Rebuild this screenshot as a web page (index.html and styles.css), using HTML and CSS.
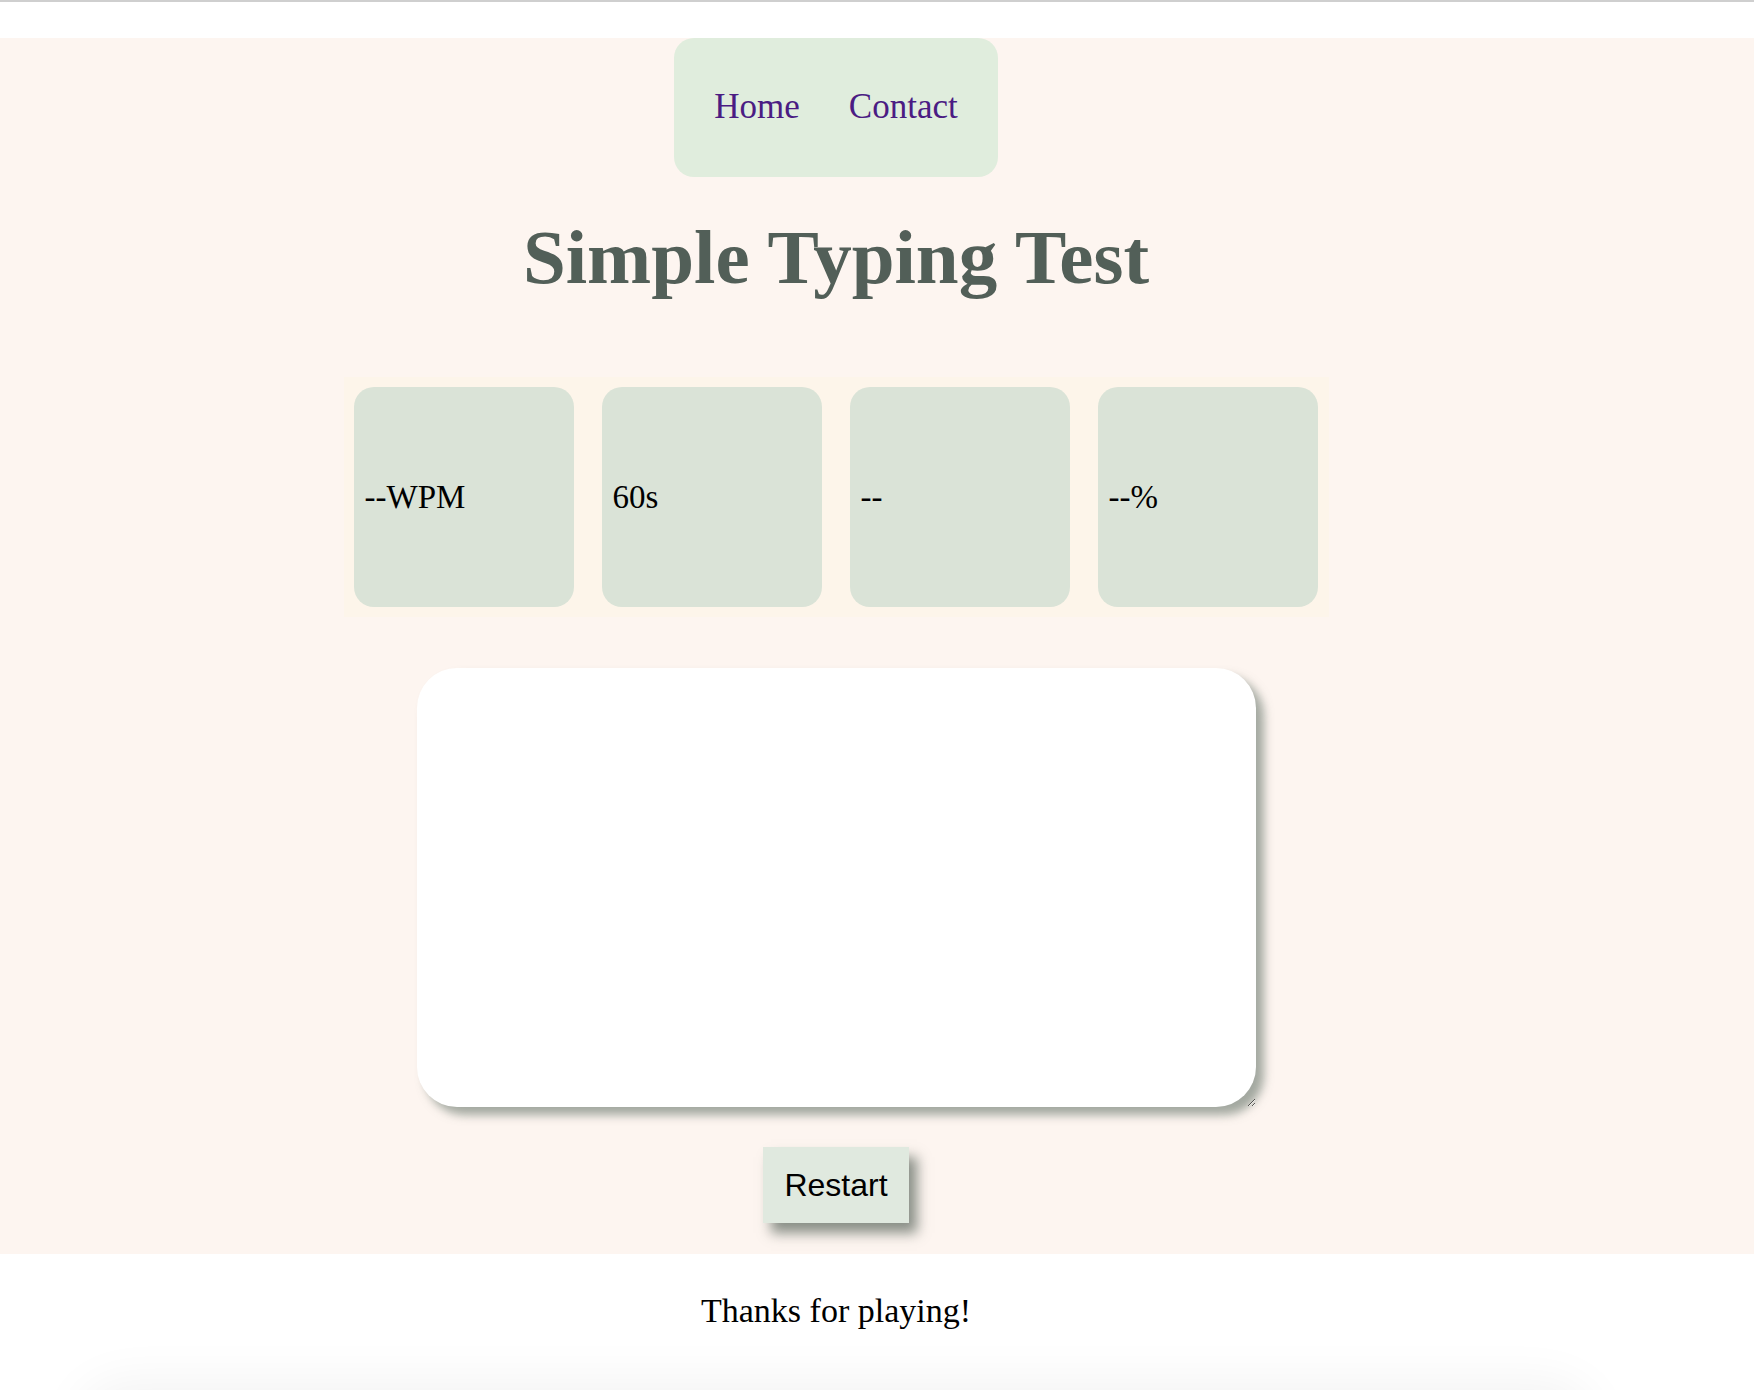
FILE: index.html
```html
<!DOCTYPE html>
<html lang="en">
<head>
<meta charset="utf-8">
<title>Simple Typing Test</title>
<link rel="stylesheet" href="styles.css">
</head>
<body>
<div class="topline"></div>
<div class="topgap"></div>
<main class="main">
  <nav class="nav">
    <a class="nav-link" href="#">Home</a>
    <a class="nav-link" href="#">Contact</a>
  </nav>
  <h1 class="title">Simple Typing Test</h1>
  <section class="stats">
    <div class="stat">--WPM</div>
    <div class="stat">60s</div>
    <div class="stat">--</div>
    <div class="stat">--%</div>
  </section>
  <textarea class="input"></textarea>
  <button class="restart" type="button">Restart</button>
</main>
<footer class="footer">
  <p class="thanks">Thanks for playing!</p>
  <div class="below"></div>
</footer>
</body>
</html>
```
FILE: styles.css
```css
html, body {
  margin: 0;
  padding: 0;
  background: #ffffff;
  font-family: "Liberation Serif", "Times New Roman", serif;
}

.topline {
  height: 2px;
  background: #cfcfcf;
}

.topgap {
  height: 36px;
}

.main {
  background: #fdf5f0;
  display: flex;
  flex-direction: column;
  align-items: center;
  padding: 0 82px 31px 0;
}

.nav {
  display: flex;
  gap: 49px;
  padding: 49px 40px 50px 40px;
  background: #e0eddd;
  border-radius: 20px;
}

.nav-link {
  font-size: 35px;
  line-height: 40px;
  color: #4b1c83;
  text-decoration: none;
}

.title {
  margin: 37px 0 77px 0;
  font-size: 77px;
  line-height: 86px;
  font-weight: bold;
  color: #525f58;
}

.stats {
  display: flex;
  gap: 28px;
  padding: 10px 11px 10px 10px;
  background: #fdf5ea;
}

.stat {
  width: 220px;
  height: 220px;
  box-sizing: border-box;
  padding-left: 11px;
  display: flex;
  align-items: center;
  background: #dae3d7;
  border-radius: 20px;
  font-size: 33px;
  color: #000;
}

.input {
  margin-top: 51px;
  width: 839px;
  height: 439px;
  box-sizing: border-box;
  border: none;
  border-radius: 40px;
  background: #ffffff;
  box-shadow: 8px 8px 10px rgba(90, 105, 95, 0.55);
  outline: none;
}

.restart {
  margin-top: 40px;
  padding: 20px 21px;
  border: none;
  border-radius: 0;
  background: #e0e9df;
  font-family: "Liberation Sans", Arial, sans-serif;
  font-size: 32px;
  line-height: 36px;
  color: #000;
  box-shadow: 8px 10px 12px rgba(60, 75, 65, 0.6);
}

.footer {
  display: flex;
  flex-direction: column;
  align-items: center;
  padding-right: 82px;
}

.thanks {
  margin: 37px 0 0 0;
  font-size: 34px;
  line-height: 40px;
  color: #000;
}

.below {
  margin-top: 60px;
  width: 1500px;
  height: 80px;
  border-radius: 40px;
  box-shadow: 0 0 50px 10px rgba(0, 0, 0, 0.05);
}
```
